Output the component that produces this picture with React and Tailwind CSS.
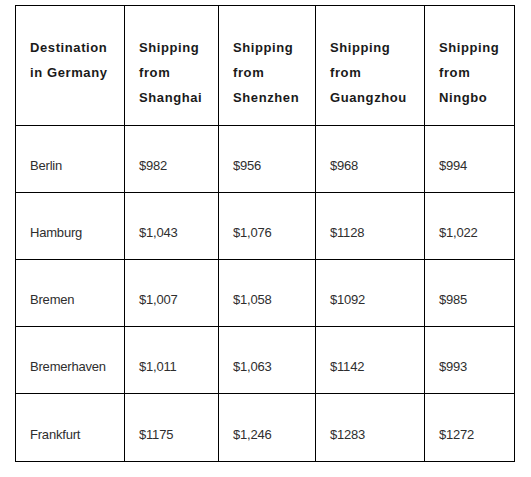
import React from 'react';

const headers = [
  ['Destination', 'in Germany'],
  ['Shipping', 'from', 'Shanghai'],
  ['Shipping', 'from', 'Shenzhen'],
  ['Shipping', 'from', 'Guangzhou'],
  ['Shipping', 'from', 'Ningbo'],
];

const rows = [
  ['Berlin', '$982', '$956', '$968', '$994'],
  ['Hamburg', '$1,043', '$1,076', '$1128', '$1,022'],
  ['Bremen', '$1,007', '$1,058', '$1092', '$985'],
  ['Bremerhaven', '$1,011', '$1,063', '$1142', '$993'],
  ['Frankfurt', '$1175', '$1,246', '$1283', '$1272'],
];

export default function App() {
  return (
    <div className="w-[531px] h-[477px] bg-white pt-[5px] pl-[15px] font-['Liberation_Sans',Arial,sans-serif]">
      <div className="grid grid-cols-[109px_94px_97px_109px_90px] w-max border-l border-t border-black">
        {headers.map((lines, i) => (
          <div
            key={i}
            className="h-[120px] border-r border-b border-black pl-[14px] pt-[29px] text-[13px] leading-[25px] font-bold tracking-[0.6px] text-[#1a1a1a]"
          >
            {lines.map((l) => (
              <div key={l}>{l}</div>
            ))}
          </div>
        ))}
        {rows.map((row, r) =>
          row.map((cell, c) => (
            <div
              key={r + '-' + c}
              className={
                (r === rows.length - 1 ? 'h-[68px] pt-[28px] ' : 'h-[67px] pt-[27px] ') +
                'border-r border-b border-black pl-[14px] text-[13px] leading-[25px] tracking-[-0.2px] text-[#2e2e2e]'
              }
            >
              {cell}
            </div>
          ))
        )}
      </div>
    </div>
  );
}
